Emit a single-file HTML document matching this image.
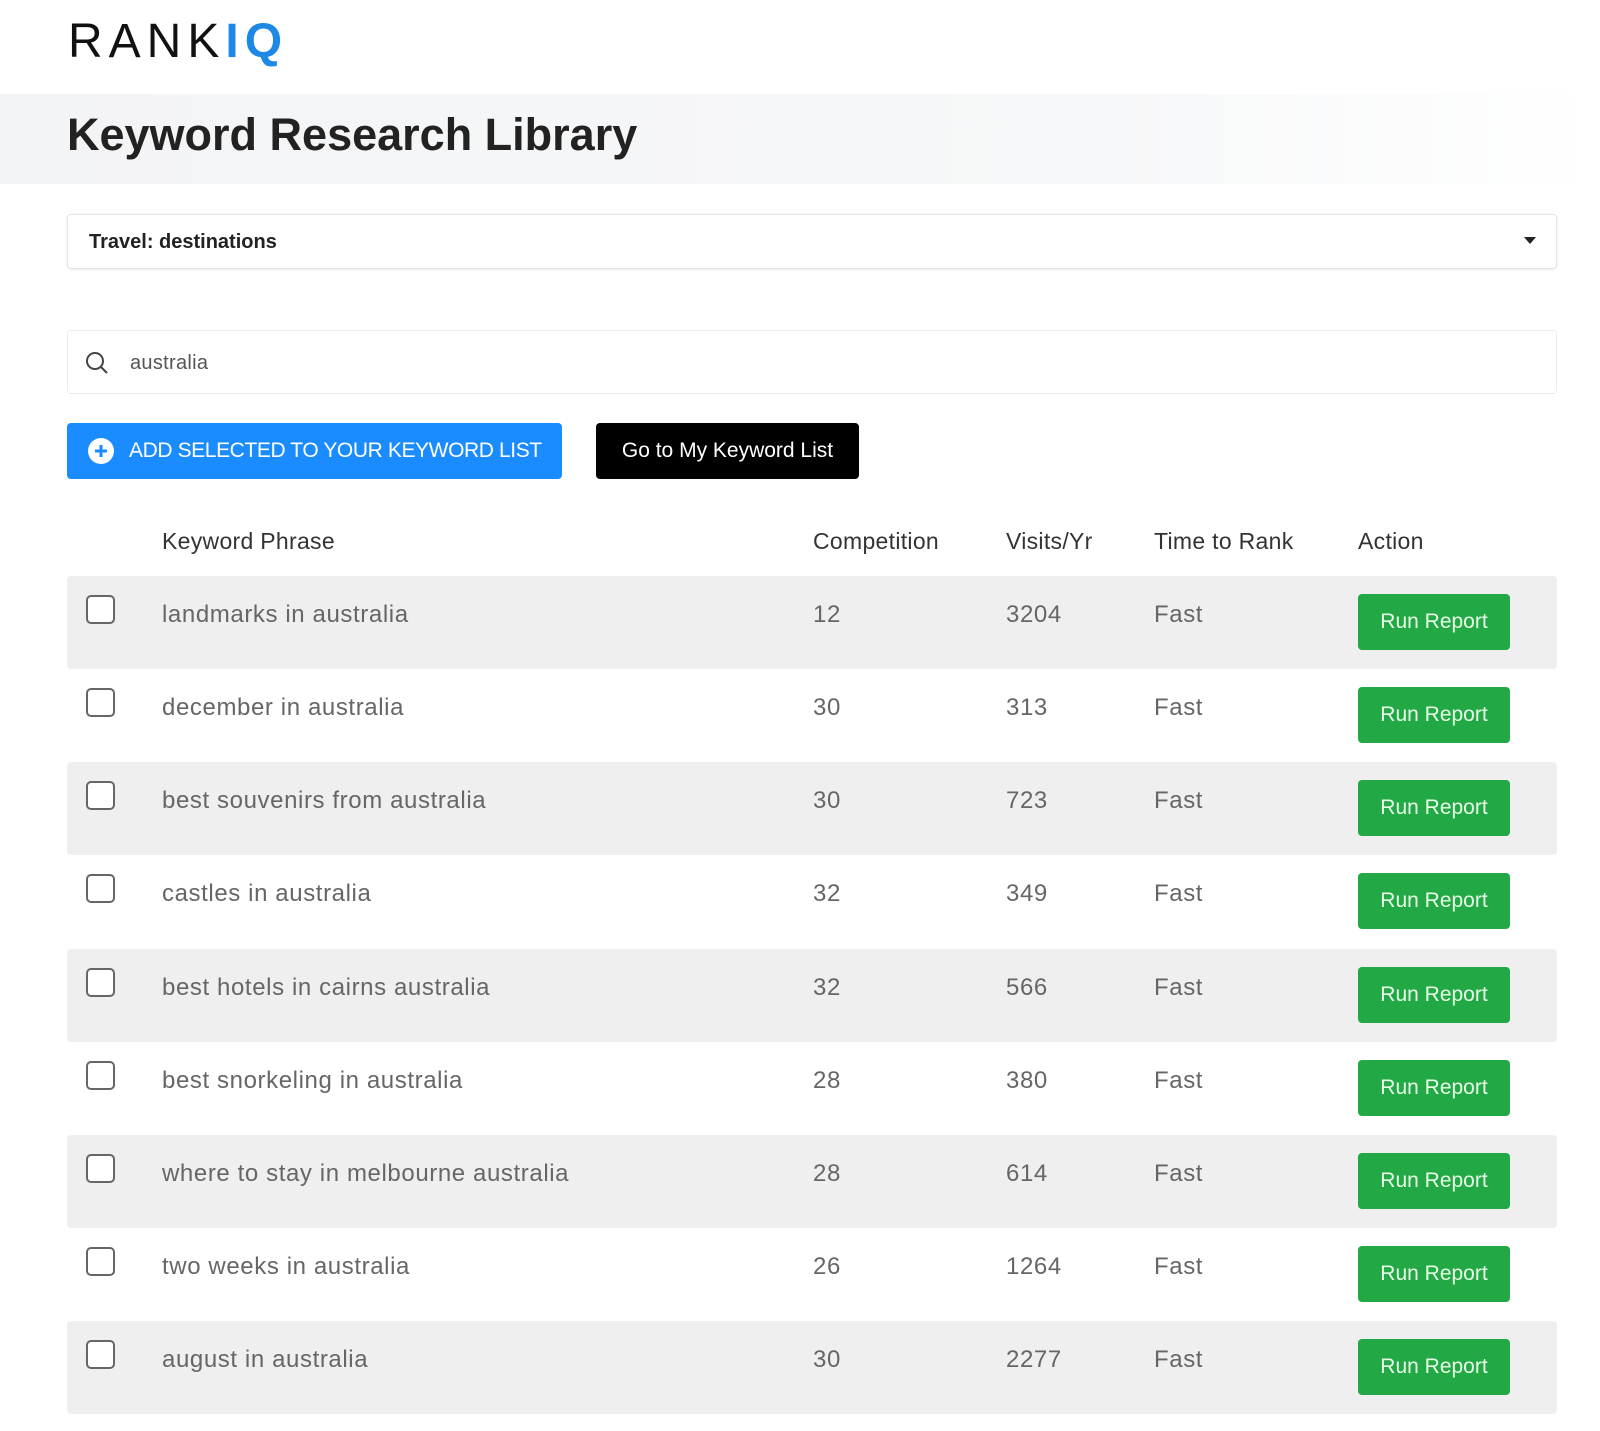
<!DOCTYPE html>
<html><head><style>
*{margin:0;padding:0;box-sizing:border-box}
body{width:1600px;height:1431px;background:#fff;font-family:"Liberation Sans",Arial,sans-serif;position:relative;overflow:hidden}
.abs{position:absolute}
.logo{left:68px;top:14px;font-size:48px;letter-spacing:6px;color:#111;font-weight:300}
.band{left:0;top:94px;width:1600px;height:90px;background:linear-gradient(90deg,#f3f4f6,#f7f8f9 70%,#fff)}
.title{left:67px;top:109px;font-size:45px;font-weight:bold;color:#222}
.sel{left:67px;top:214px;width:1490px;height:55px;border:1px solid #e3e3e3;border-radius:4px;box-shadow:0 1px 3px rgba(0,0,0,.08)}
.sel span{position:absolute;left:21px;top:16px;font-size:20px;font-weight:bold;color:#222}
.caret{position:absolute;right:20px;top:22px;width:0;height:0;border-left:6px solid transparent;border-right:6px solid transparent;border-top:7px solid #222}
.search{left:67px;top:330px;width:1490px;height:64px;border:1px solid #ececec;border-radius:3px}
.search span{position:absolute;left:62px;top:21px;font-size:20px;color:#555;letter-spacing:.3px}
.btn{top:423px;height:56px;border-radius:4px;color:#fff;font-size:21px;line-height:56px}
.blue{left:67px;width:495px;background:#1a8cff;padding-left:62px;letter-spacing:-.4px}
.black{left:596px;width:263px;background:#000;text-align:center}
.th{top:528px;font-size:23px;color:#333;letter-spacing:.3px}
.row{left:67px;width:1490px;height:93px;border-radius:4px}
.row.g{background:#efefef}
.cb{position:absolute;left:19px;top:19px;width:29px;height:29px;border:2px solid #666;border-radius:5px;background:#fff}
.c{position:absolute;top:25px;font-size:24px;color:#666;letter-spacing:.6px}
.rr{position:absolute;left:1291px;top:18px;width:152px;height:56px;background:#22a845;border-radius:4px;color:#e8ffe8;font-size:21px;text-align:center;line-height:56px}
</style></head><body>
<div class="abs logo">RANK<span style="color:#1e88e5;font-weight:bold">IQ</span></div>
<div class="abs band"></div>
<div class="abs title">Keyword Research Library</div>
<div class="abs sel"><span>Travel: destinations</span><div class="caret"></div></div>
<div class="abs search"><svg style="position:absolute;left:17px;top:20px" width="24" height="24" viewBox="0 0 24 24" fill="none" stroke="#444" stroke-width="2"><circle cx="10" cy="10" r="8"/><path d="M16 16l6 6"/></svg><span>australia</span></div>
<div class="abs btn blue"><svg style="position:absolute;left:21px;top:15px" width="26" height="26" viewBox="0 0 26 26"><circle cx="13" cy="13" r="13" fill="#fff"/><path d="M13 7v12M7 13h12" stroke="#1a8cff" stroke-width="3"/></svg>ADD SELECTED TO YOUR KEYWORD LIST</div>
<div class="abs btn black">Go to My Keyword List</div>
<div class="abs th" style="left:162px">Keyword Phrase</div>
<div class="abs th" style="left:813px">Competition</div>
<div class="abs th" style="left:1006px">Visits/Yr</div>
<div class="abs th" style="left:1154px">Time to Rank</div>
<div class="abs th" style="left:1358px">Action</div>
<div class="abs row g" style="top:576px"><div class="cb"></div><div class="c" style="left:95px">landmarks in australia</div><div class="c" style="left:746px">12</div><div class="c" style="left:939px">3204</div><div class="c" style="left:1087px">Fast</div><div class="rr">Run Report</div></div>
<div class="abs row" style="top:669px"><div class="cb"></div><div class="c" style="left:95px">december in australia</div><div class="c" style="left:746px">30</div><div class="c" style="left:939px">313</div><div class="c" style="left:1087px">Fast</div><div class="rr">Run Report</div></div>
<div class="abs row g" style="top:762px"><div class="cb"></div><div class="c" style="left:95px">best souvenirs from australia</div><div class="c" style="left:746px">30</div><div class="c" style="left:939px">723</div><div class="c" style="left:1087px">Fast</div><div class="rr">Run Report</div></div>
<div class="abs row" style="top:855px"><div class="cb"></div><div class="c" style="left:95px">castles in australia</div><div class="c" style="left:746px">32</div><div class="c" style="left:939px">349</div><div class="c" style="left:1087px">Fast</div><div class="rr">Run Report</div></div>
<div class="abs row g" style="top:949px"><div class="cb"></div><div class="c" style="left:95px">best hotels in cairns australia</div><div class="c" style="left:746px">32</div><div class="c" style="left:939px">566</div><div class="c" style="left:1087px">Fast</div><div class="rr">Run Report</div></div>
<div class="abs row" style="top:1042px"><div class="cb"></div><div class="c" style="left:95px">best snorkeling in australia</div><div class="c" style="left:746px">28</div><div class="c" style="left:939px">380</div><div class="c" style="left:1087px">Fast</div><div class="rr">Run Report</div></div>
<div class="abs row g" style="top:1135px"><div class="cb"></div><div class="c" style="left:95px">where to stay in melbourne australia</div><div class="c" style="left:746px">28</div><div class="c" style="left:939px">614</div><div class="c" style="left:1087px">Fast</div><div class="rr">Run Report</div></div>
<div class="abs row" style="top:1228px"><div class="cb"></div><div class="c" style="left:95px">two weeks in australia</div><div class="c" style="left:746px">26</div><div class="c" style="left:939px">1264</div><div class="c" style="left:1087px">Fast</div><div class="rr">Run Report</div></div>
<div class="abs row g" style="top:1321px"><div class="cb"></div><div class="c" style="left:95px">august in australia</div><div class="c" style="left:746px">30</div><div class="c" style="left:939px">2277</div><div class="c" style="left:1087px">Fast</div><div class="rr">Run Report</div></div>
</body></html>
